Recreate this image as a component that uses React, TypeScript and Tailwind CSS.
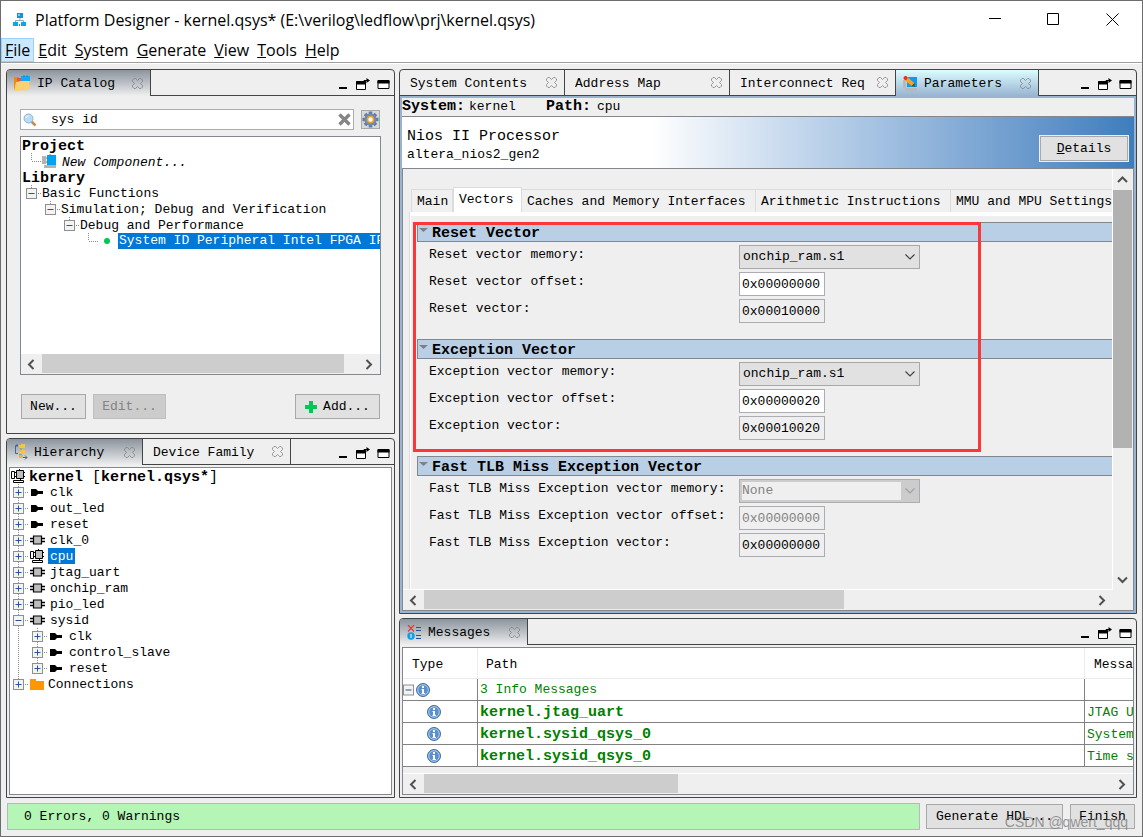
import React from "react";

const CHROME = "border-[#a8a8a8] bg-[#e1e1e1]";

/* ---------- window and panel glyphs ---------- */

function AppLogo() {
  return (
    <svg width="14" height="14" viewBox="0 0 14 14" aria-hidden="true">
      <path d="M7 5v3M2.500 10V7.500h8V10" stroke="#8fa8b8" fill="none" />
      <rect x="4" y="0" width="6" height="5" fill="#0f93e6" />
      <rect x="5" y="1" width="2" height="2" fill="#7ccaf7" />
      <rect x="0" y="9" width="5" height="4" fill="#0fa4f0" />
      <rect x="8" y="9" width="5" height="4" fill="#0fa4f0" />
      <rect x="6" y="11" width="1" height="2" fill="#0f93e6" />
    </svg>
  );
}

function CloseGlyph() {
  return (
    <svg width="11" height="11" viewBox="0 0 11 11" aria-hidden="true">
      <path
        d="M.5 2 2 .5h1.500l2 2 2-2H9L10.500 2v1.500l-2 2 2 2V9L9 10.500H7.500l-2-2-2 2H2L.5 9V7.500l2-2-2-2z"
        fill="none"
        stroke="#808080"
        strokeWidth=".8"
      />
    </svg>
  );
}

function PanelControls() {
  return (
    <div className="ml-auto flex h-full items-start gap-[7px] pt-2 pr-1">
      <button aria-label="Minimize panel" className="h-3 w-3">
        <svg width="12" height="12" viewBox="0 0 12 12">
          <path d="M3 10h8" stroke="#000" strokeWidth="2" />
        </svg>
      </button>
      <button aria-label="Detach panel" className="h-3 w-[15px]">
        <svg width="15" height="13" viewBox="0 0 15 13">
          <path d="M1.500 3.500v8h9v-8z" fill="#fff" stroke="#000" />
          <path d="M1 5h10" stroke="#000" strokeWidth="3" />
          <path d="M9 4.500v-2h4" stroke="#000" fill="none" />
          <path d="M11.500 0v5L15 2.500z" fill="#000" />
        </svg>
      </button>
      <button aria-label="Maximize panel" className="h-3 w-[13px]">
        <svg width="13" height="12" viewBox="0 0 13 12">
          <path d="M1 2.500h11v8H1z" fill="#fff" stroke="#000" />
          <path d="M.5 4h12" stroke="#000" strokeWidth="3" />
        </svg>
      </button>
    </div>
  );
}

function Chevron({ dir, color = "#505050" }: { dir: "l" | "r" | "u" | "d"; color?: string }) {
  const d = {
    l: "M7.500 1 3 5.500 7.500 10",
    r: "M3.500 1 8 5.500 3.500 10",
    u: "M1 8 5.500 3.500 10 8",
    d: "M1 3.500 5.500 8 10 3.500",
  }[dir];
  return (
    <svg width="11" height="11" viewBox="0 0 11 11" aria-hidden="true">
      <path d={d} fill="none" stroke={color} strokeWidth="2" />
    </svg>
  );
}

/* ---------- tab and tree icons ---------- */

function CatalogIcon() {
  return (
    <svg width="17" height="16" viewBox="0 0 17 16" aria-hidden="true">
      <path d="M0 2h5l1 2v11H0z" fill="#f08a00" />
      <path d="M3 3h4v4H3z" fill="#e2574c" />
      <path d="M7 1h9v8H7z" fill="#0fa9f5" />
      <path d="M10 0v2M13 0v2" stroke="#2b80b8" />
      <path d="m2 7 5-1 9 0-1 9-15 1z" fill="#ffd071" />
    </svg>
  );
}

function HierarchyIcon() {
  return (
    <svg width="14" height="16" viewBox="0 0 14 16" aria-hidden="true">
      <path d="M4 1.500H1.500v8H4M3 0v3" stroke="#3d6a8f" fill="none" />
      <path d="M5 1h2V0h4v4H5zM5 7h2V6h4v4H5z" fill="#f6c63a" />
      <path d="M7 4v2" stroke="#b98a1c" />
      <path d="M5 11h3v3M8 13.500h5M11 11.500l2 2-2 2" stroke="#3d6a8f" fill="none" />
      <rect x="5" y="11" width="4" height="3" fill="#e4b93c" />
    </svg>
  );
}

function ParametersIcon() {
  return (
    <svg width="15" height="15" viewBox="0 0 15 15" aria-hidden="true">
      <path d="M0 4h3v8H0zM2 12h12v3H2z" fill="#b9b9b9" />
      <path d="M4 1h10v10H4z" fill="#0f9af0" />
      <path d="m3 2.500 7 6" stroke="#f5a51c" strokeWidth="4" />
      <path d="m8.500 10 3.500 1-.5-4z" fill="#6b4a1c" />
      <circle cx="2.500" cy="2" r="2" fill="#ee2a2a" />
    </svg>
  );
}

function MessagesIcon() {
  return (
    <svg width="15" height="15" viewBox="0 0 15 15" aria-hidden="true">
      <path d="m1 0 6 6.500M7 0 1 6.500" stroke="#e23b2e" strokeWidth="1.200" />
      <circle cx="4" cy="11" r="3.700" fill="#0f9ee8" />
      <path d="M4 9v4" stroke="#fff" />
      <path d="M9 2.500h5M9 5.500h5M9 10.500h5M9 13.500h5" stroke="#1f4fa8" />
    </svg>
  );
}

function ComponentIcon({ color }: { color: "gray" | "blue" }) {
  return color === "blue" ? (
    <svg width="16" height="15" viewBox="0 0 16 15" aria-hidden="true">
      <path d="M0 2h4v8H0zM2 11h12v3H2z" fill="#b3b3b3" />
      <path d="M5 1h9v10H5z" fill="#00a2f2" />
      <path d="M8 0v2M4 4h2M4 8h2" stroke="#2b80b8" />
    </svg>
  ) : (
    <svg width="16" height="15" viewBox="0 0 16 15" aria-hidden="true">
      <path d="M.5 2.500h3v7h-3z" fill="#fff" stroke="#000" />
      <path d="M5.500 1.500h7v8h-7z" fill="#bdbdbd" stroke="#000" />
      <path d="M8.500 0v1M12.500 3.500H14M12.500 7.500H14M4 3.500h1M4 7.500h1M9.500 9.500v2" stroke="#000" />
      <path d="M2.500 11.500h10v2h-10z" fill="#fff" stroke="#000" />
    </svg>
  );
}

function PortIcon() {
  return (
    <svg width="16" height="9" viewBox="0 0 16 9" aria-hidden="true">
      <path d="M1 1h5l2 2h5v3H8L6 8H1z" fill="#000" />
    </svg>
  );
}

function ChipIcon() {
  return (
    <svg width="16" height="10" viewBox="0 0 16 10" aria-hidden="true">
      <path d="M0 3.500h3M0 6.500h3M12 3.500h3M12 6.500h3" stroke="#000" strokeWidth="1.500" />
      <path d="M3.500 1h8v8h-8z" fill="#bdbdbd" stroke="#000" strokeWidth="1.200" />
    </svg>
  );
}

function FolderIcon() {
  return (
    <svg width="16" height="13" viewBox="0 0 16 13" aria-hidden="true">
      <path d="M0 1h6v2h8v9H0z" fill="#ff9800" />
    </svg>
  );
}

function InfoIcon() {
  return (
    <svg width="14" height="14" viewBox="0 0 14 14" aria-hidden="true">
      <circle cx="7" cy="7" r="6.500" fill="#5b90cc" stroke="#44709f" />
      <circle cx="7" cy="7" r="5.300" fill="none" stroke="#c8dcf2" strokeWidth=".8" />
      <path d="M6 3h2v2H6zM5.500 6H8v4h1v1H5.500v-1H6V7h-.5z" fill="#fff" />
    </svg>
  );
}

function BoxSign({ sign }: { sign: "+" | "-" }) {
  return (
    <>
      <rect x="3.500" y="3.500" width="10" height="10" fill="#f3f3f3" stroke="#8f8f8f" />
      <path d={sign === "+" ? "M5.500 8.500h6M8.500 5.500v6" : "M5.500 8.500h6"} stroke="#2f4f9f" />
    </>
  );
}

/* One indentation cell of a tree: dotted guides and, where present, the expander box. */
function Guide({
  sign,
  up = false,
  down = false,
  right = true,
}: {
  sign?: "+" | "-";
  up?: boolean;
  down?: boolean;
  right?: boolean;
}) {
  return (
    <svg width="19" height="16" viewBox="0 0 19 16" className="shrink-0" aria-hidden="true">
      <g stroke="#8a8a8a" strokeDasharray="1 1" fill="none">
        {up && <path d="M8.500 0v8" />}
        {down && <path d="M8.500 8v8" />}
        {right && <path d="M9 8.500h10" />}
      </g>
      {sign && <BoxSign sign={sign} />}
    </svg>
  );
}

/* ---------- panels ---------- */

type Tab = { label: string; width: string; active?: boolean; icon?: React.ReactNode };

function Panel({
  tabs,
  className,
  focused = false,
  children,
}: {
  tabs: Tab[];
  className: string;
  focused?: boolean;
  children: React.ReactNode;
}) {
  return (
    <section
      className={`flex min-h-0 flex-col overflow-hidden rounded-t-[4px] border border-[#444] bg-[#efefef] ${className}`}
    >
      <div className="flex h-[26px] shrink-0" role="tablist">
        {tabs.map((t) => (
          <div
            key={t.label}
            className={`flex shrink-0 items-center border-r border-[#444] pr-[7px] ${t.width} ${
              t.active
                ? focused
                  ? "bg-linear-to-b from-[#dcfdff] to-[#99b4d1] pl-[7px]"
                  : "bg-linear-to-b from-[#8b949e] to-[#efefef] pl-[7px]"
                : "border-b pl-2.5"
            }`}
          >
            {t.icon}
            <button
              role="tab"
              aria-selected={!!t.active}
              className={`min-w-0 flex-1 overflow-hidden pt-0.5 text-left whitespace-nowrap ${t.icon ? "ml-1.5" : ""}`}
            >
              {t.label}
            </button>
            <button aria-label={`Close ${t.label}`} className="ml-3 shrink-0">
              <CloseGlyph />
            </button>
          </div>
        ))}
        <div className="flex flex-1 border-b border-[#444]">
          <PanelControls />
        </div>
      </div>
      {children}
    </section>
  );
}

function HScroll({ thumb }: { thumb: string }) {
  return (
    <div className="flex h-5 shrink-0 items-center bg-[#efefef]">
      <div className="flex w-[21px] shrink-0 justify-center">
        <Chevron dir="l" />
      </div>
      <div className="h-full min-w-0 flex-1">
        <div className={`h-[19px] bg-[#cdcdcd] ${thumb}`} />
      </div>
      <div className="flex w-[23px] shrink-0 justify-center">
        <Chevron dir="r" />
      </div>
    </div>
  );
}

/* ---------- IP catalog ---------- */

function IpCatalog() {
  return (
    <Panel
      className="h-[365px] shrink-0"
      tabs={[{ label: "IP Catalog", width: "w-[144px]", active: true, icon: <CatalogIcon /> }]}
    >
      <div className="flex min-h-0 flex-1 flex-col px-[13px] pt-[13px] pb-[14px]">
        <div className="flex items-center gap-[7px] pr-px">
          <div className="flex h-[21px] flex-1 items-center border border-[#abadb3] bg-white px-0.5">
            <svg width="14" height="14" viewBox="0 0 14 14" aria-hidden="true">
              <path d="m8.500 8.500 4 4" stroke="#c68f58" strokeWidth="2.600" />
              <circle cx="5.500" cy="5.500" r="4.500" fill="#b9dcf6" stroke="#8fb4d6" />
              <path d="M3 5a2.500 2.500 0 0 1 2.500-2" stroke="#fff" fill="none" />
            </svg>
            <input
              aria-label="Search IP catalog"
              defaultValue="sys id"
              className="min-w-0 flex-1 bg-transparent pl-3.5 outline-none"
            />
            <button aria-label="Clear search">
              <svg width="13" height="13" viewBox="0 0 13 13">
                <path d="m1.500 1.500 10 10M11.500 1.500l-10 10" stroke="#858585" strokeWidth="3.400" />
              </svg>
            </button>
          </div>
          <button
            aria-label="Search options"
            className="flex h-[19px] w-[19px] items-center justify-center border border-[#a8a8a8] bg-[#d9d9d9]"
          >
            <svg width="17" height="17" viewBox="0 0 17 17">
              <path d="M8.500 .5v16M.5 8.500h16M3 3l11 11M14 3 3 14" stroke="#5f7da3" strokeWidth="3.600" />
              <circle cx="8.500" cy="8.500" r="6" fill="#6d8bb0" />
              <circle cx="8.500" cy="8.500" r="3" fill="#fff" stroke="#f0a22c" strokeWidth="1.600" />
            </svg>
          </button>
        </div>
        <div className="mt-1.5 flex min-h-0 flex-1 flex-col border border-[#828790] bg-white">
          <div className="min-h-0 flex-1 overflow-hidden whitespace-nowrap">
            <div className="h-4 pl-px text-[15px] leading-5 font-bold">Project</div>
            <div className="flex h-4 items-center pl-0.5 italic">
              <Guide up />
              <ComponentIcon color="blue" />
              <span className="ml-1 pt-1">New Component...</span>
            </div>
            <div className="h-4 pl-px text-[15px] leading-5 font-bold">Library</div>
            <div className="flex h-4 items-center pl-0.5 leading-4">
              <Guide sign="-" up />
              <span className="pt-0.5">Basic Functions</span>
            </div>
            <div className="flex h-4 items-center pl-[21px] leading-4">
              <Guide sign="-" up />
              <span className="pt-0.5">Simulation; Debug and Verification</span>
            </div>
            <div className="flex h-4 items-center pl-10 leading-4">
              <Guide sign="-" up />
              <span className="pt-0.5">Debug and Performance</span>
            </div>
            <div className="flex h-4 items-center pl-[59px] leading-4">
              <Guide up />
              <svg width="19" height="16" viewBox="0 0 19 16" className="shrink-0" aria-hidden="true">
                <circle cx="8" cy="8" r="3" fill="#00c853" />
              </svg>
              <span className="h-4 bg-[#0078d7] pl-px text-white">System ID Peripheral Intel FPGA IP</span>
            </div>
          </div>
          <HScroll thumb="w-[96%]" />
        </div>
        <div className="mt-[19px] flex gap-[7px] px-px">
          <button className={`h-[25px] w-[65px] border ${CHROME}`}>New...</button>
          <button disabled className="h-[25px] w-[73px] border border-[#bfbfbf] bg-[#ccc] text-[#838383]">
            Edit...
          </button>
          <button className={`ml-auto flex h-[25px] w-[85px] items-center justify-center gap-1.5 border ${CHROME}`}>
            <svg width="12" height="12" viewBox="0 0 12 12" aria-hidden="true">
              <path d="M6 0v12M0 6h12" stroke="#00c853" strokeWidth="4" />
            </svg>
            Add...
          </button>
        </div>
      </div>
    </Panel>
  );
}

/* ---------- hierarchy ---------- */

type Node = {
  name: string;
  icon: "port" | "chip" | "cpu" | "folder";
  level?: 2;
  open?: boolean;
  last?: boolean;
  selected?: boolean;
};

const NODES: Node[] = [
  { name: "clk", icon: "port" },
  { name: "out_led", icon: "port" },
  { name: "reset", icon: "port" },
  { name: "clk_0", icon: "chip" },
  { name: "cpu", icon: "cpu", selected: true },
  { name: "jtag_uart", icon: "chip" },
  { name: "onchip_ram", icon: "chip" },
  { name: "pio_led", icon: "chip" },
  { name: "sysid", icon: "chip", open: true },
  { name: "clk", icon: "port", level: 2 },
  { name: "control_slave", icon: "port", level: 2 },
  { name: "reset", icon: "port", level: 2, last: true },
  { name: "Connections", icon: "folder", last: true },
];

function NodeIcon({ kind }: { kind: Node["icon"] }) {
  if (kind === "port") return <PortIcon />;
  if (kind === "chip") return <ChipIcon />;
  if (kind === "cpu") return <ComponentIcon color="gray" />;
  return <FolderIcon />;
}

function Hierarchy() {
  return (
    <Panel
      className="flex-1"
      tabs={[
        { label: "Hierarchy", width: "w-[136px]", active: true, icon: <HierarchyIcon /> },
        { label: "Device Family", width: "w-[148px]" },
      ]}
    >
      <div className="m-0.5 min-h-0 flex-1 overflow-hidden border border-[#828790] bg-white whitespace-nowrap">
        <div className="flex h-4 items-center pl-px text-[15px] font-bold">
          <ComponentIcon color="gray" />
          <span className="ml-0.5 pt-1 leading-4">
            kernel <span className="font-normal">[</span>kernel.qsys*<span className="font-normal">]</span>
          </span>
        </div>
        {NODES.map((n, i) => (
          <div key={i} className="flex h-4 items-center">
            {n.level === 2 && <Guide up down right={false} />}
            <Guide sign={n.open ? "-" : "+"} up down={!n.last} />
            <span className="ml-px flex w-4 shrink-0 items-center">
              <NodeIcon kind={n.icon} />
            </span>
            <span
              className={`h-4 px-0.5 leading-[17px] ${n.icon === "folder" ? "" : "ml-0.5"} ${
                n.selected ? "bg-[#0078d7] text-white" : ""
              }`}
            >
              {n.name}
            </span>
          </div>
        ))}
      </div>
    </Panel>
  );
}

/* ---------- parameters ---------- */

type Section = {
  title: string;
  prefix: string;
  memory: string;
  offset: string;
  vector: string;
  disabled?: boolean;
};

const SECTIONS: Section[] = [
  { title: "Reset Vector", prefix: "Reset vector", memory: "onchip_ram.s1", offset: "0x00000000", vector: "0x00010000" },
  {
    title: "Exception Vector",
    prefix: "Exception vector",
    memory: "onchip_ram.s1",
    offset: "0x00000020",
    vector: "0x00010020",
  },
  {
    title: "Fast TLB Miss Exception Vector",
    prefix: "Fast TLB Miss Exception vector",
    memory: "None",
    offset: "0x00000000",
    vector: "0x00000000",
    disabled: true,
  },
];

function VectorSection({ s, index }: { s: Section; index: number }) {
  const id = `section-${index}`;
  const field = "h-6 w-[86px] border border-[#abadb3] px-0.5";
  return (
    <fieldset className="pb-4">
      <div className="flex h-5 items-center border border-r-0 border-[#828790] bg-[#b8cfe5] pt-1">
        <svg width="14" height="12" viewBox="0 0 14 12" className="shrink-0" aria-hidden="true">
          <path d="M1 0h9L5.500 4z" fill="#808080" />
        </svg>
        <legend className="text-[15px] leading-4 font-bold">{s.title}</legend>
      </div>
      <div className="mt-[3px] grid grid-cols-[310px_1fr] gap-y-[3px] pl-3">
        <label htmlFor={`${id}-memory`} className="leading-5">
          {s.prefix} memory:
        </label>
        <div className="relative h-6 w-[181px]">
          <select
            id={`${id}-memory`}
            disabled={s.disabled}
            className={`h-6 w-full appearance-none border pr-6 ${
              s.disabled
                ? "border-[#abadb3] bg-[#efefef] pl-0.5 text-[#838383] opacity-100 shadow-[inset_0_0_0_2px_#ccc]"
                : `pl-[3px] ${CHROME}`
            }`}
          >
            <option>{s.memory}</option>
          </select>
          <span
            className={`pointer-events-none absolute top-px right-px flex h-[22px] w-[18px] items-center justify-center ${
              s.disabled ? "bg-[#ccc]" : ""
            }`}
          >
            <svg width="10" height="6" viewBox="0 0 10 6" aria-hidden="true">
              <path d="M.5 .5 5 5 9.500 .5" fill="none" stroke={s.disabled ? "#a0a0a0" : "#444"} strokeWidth="1.200" />
            </svg>
          </span>
        </div>
        <label htmlFor={`${id}-offset`} className="leading-5">
          {s.prefix} offset:
        </label>
        <input
          id={`${id}-offset`}
          defaultValue={s.offset}
          disabled={s.disabled}
          className={`${field} ${s.disabled ? "bg-[#efefef] text-[#838383]" : "bg-white"}`}
        />
        <label htmlFor={`${id}-vector`} className="leading-5">
          {s.prefix}:
        </label>
        <input id={`${id}-vector`} readOnly defaultValue={s.vector} className={`${field} bg-[#efefef]`} />
      </div>
    </fieldset>
  );
}

const PARAM_TABS = [
  { label: "Main", width: "w-[42px]" },
  { label: "Vectors", width: "w-[69px]" },
  { label: "Caches and Memory Interfaces", width: "w-[235px]" },
  { label: "Arithmetic Instructions", width: "w-[196px]" },
  { label: "MMU and MPU Settings", width: "w-[180px]" },
];

function Parameters() {
  return (
    <Panel
      className="flex-1"
      focused
      tabs={[
        { label: "System Contents", width: "w-[165px]" },
        { label: "Address Map", width: "w-[165px]" },
        { label: "Interconnect Requirements", width: "w-[166px]" },
        { label: "Parameters", width: "w-[143px]", active: true, icon: <ParametersIcon /> },
      ]}
    >
      <div className="flex min-h-0 flex-1 flex-col bg-[#99b4d1] p-0.5">
        <div className="flex min-h-0 flex-1 flex-col bg-[#efefef]">
          <div className="flex h-[19px] shrink-0 items-center border-b border-[#828790]">
            <b className="w-[67px] text-[15px]">System:</b>
            <span className="w-[77px]">kernel</span>
            <b className="w-[51px] text-[15px]">Path:</b>
            <span>cpu</span>
          </div>
          <div className="flex h-[51px] shrink-0 items-center justify-between bg-linear-to-r from-white from-34% to-[#3e7dbd] pr-1.5 pl-[5px]">
            <div className="pt-1">
              <h1 className="text-[15px] leading-5">Nios II Processor</h1>
              <p className="leading-4">altera_nios2_gen2</p>
            </div>
            <button className={`mt-3 h-[25px] w-[88px] border ring-1 ring-[#efefef] ${CHROME}`}>
              <u>D</u>etails
            </button>
          </div>
          <div className="flex min-h-0 flex-1 flex-col border border-[#828790]">
            <div className="flex min-h-0 flex-1">
              <div className="min-w-0 flex-1 overflow-hidden border-r border-b border-white pt-[18px] pl-1.5">
                <div className="flex items-end pl-0.5 whitespace-nowrap">
                  {PARAM_TABS.map((t) => (
                    <button
                      key={t.label}
                      className={`shrink-0 border border-b-0 border-[#dcdcdc] pl-[5px] text-left ${t.width} ${
                        t.label === "Vectors" ? "h-[25px] bg-white" : "-ml-px h-[23px] bg-[#f0f0f0] pt-0.5 first:ml-0"
                      }`}
                    >
                      {t.label}
                    </button>
                  ))}
                </div>
                <div className="h-[377px] border-l border-[#dcdcdc]">
                  <div className="h-full border-t-4 border-l border-white pt-1.5 pl-1.5">
                    <div className="relative">
                      {SECTIONS.map((s, i) => (
                        <VectorSection key={s.title} s={s} index={i} />
                      ))}
                      <div className="pointer-events-none absolute top-0 -left-1 h-[230px] w-[568px] border-3 border-[#fc3737]" />
                    </div>
                  </div>
                </div>
              </div>
              <div className="mr-px flex w-[19px] shrink-0 flex-col items-center">
                <div className="flex h-[21px] items-center">
                  <Chevron dir="u" />
                </div>
                <div className="w-full flex-1">
                  <div className="h-[68%] w-full bg-[#b2b2b2]" />
                </div>
                <div className="flex h-[21px] items-center">
                  <Chevron dir="d" />
                </div>
              </div>
            </div>
            <div className="pr-5">
              <HScroll thumb="w-[63%]" />
            </div>
          </div>
        </div>
      </div>
    </Panel>
  );
}

/* ---------- messages ---------- */

const MESSAGES = [
  { path: "kernel.jtag_uart", text: "JTAG UART" },
  { path: "kernel.sysid_qsys_0", text: "System ID" },
  { path: "kernel.sysid_qsys_0", text: "Time stamp" },
];

function Messages() {
  const head = "border-b border-[#ececec] pt-1 text-left font-normal";
  const cell = "border-b border-[#828282] p-0";
  return (
    <Panel
      className="h-[180px] shrink-0"
      tabs={[{ label: "Messages", width: "w-[128px]", active: true, icon: <MessagesIcon /> }]}
    >
      <div className="m-0.5 flex min-h-0 flex-1 flex-col overflow-hidden border border-[#828790]">
        <table className="w-full table-fixed border-separate border-spacing-0 bg-white whitespace-nowrap">
          <colgroup>
            <col className="w-[75px]" />
            <col />
            <col className="w-[48px]" />
          </colgroup>
          <thead>
            <tr className="h-[31px]">
              <th className={`${head} border-r pl-[9px]`}>Type</th>
              <th className={`${head} border-r pl-2`}>Path</th>
              <th className={`${head} overflow-hidden pl-[9px]`}>Message</th>
            </tr>
          </thead>
          <tbody className="text-[#008000]">
            <tr className="h-[22px]">
              <td className={`${cell} border-r`}>
                <div className="flex items-center">
                  <svg width="11" height="12" viewBox="3 3 11 11" aria-hidden="true">
                    <BoxSign sign="-" />
                  </svg>
                  <span className="ml-0.5">
                    <InfoIcon />
                  </span>
                </div>
              </td>
              <td className={`${cell} border-r pl-0.5`}>3 Info Messages</td>
              <td className={cell} />
            </tr>
            {MESSAGES.map((m, i) => (
              <tr key={i} className="h-[22px]">
                <td className={`${cell} border-r`}>
                  <div className="pl-6">
                    <InfoIcon />
                  </div>
                </td>
                <td className={`${cell} border-r pt-[3px] pl-0.5 text-[15px] leading-4 font-bold`}>{m.path}</td>
                <td className={`${cell} overflow-hidden pt-[3px] pl-0.5 leading-4`}>{m.text}</td>
              </tr>
            ))}
          </tbody>
        </table>
        <div className="flex-1 border-b border-white bg-[#efefef]" />
        <HScroll thumb="w-[37%]" />
      </div>
    </Panel>
  );
}

/* ---------- window ---------- */

const MENU = ["File", "Edit", "System", "Generate", "View", "Tools", "Help"];

export default function App() {
  return (
    <div className="flex h-screen min-h-[700px] flex-col overflow-hidden border border-[#6d6d6d] bg-[#efefef] font-['Liberation_Mono','Noto_Sans_CJK_SC',monospace] text-[13px] text-black">
      <header className="shrink-0 border-b border-[#a0a0a0] bg-white font-['Open_Sans','Noto_Sans',sans-serif]">
        <div className="flex h-[37px] items-center pl-3">
          <AppLogo />
          <span className="ml-2 text-base">
            {"Platform Designer - kernel.qsys* (E:\\verilog\\ledflow\\prj\\kernel.qsys)"}
          </span>
          <div className="ml-auto flex">
            <button aria-label="Minimize" className="flex h-9 w-[58px] items-center justify-center">
              <svg width="13" height="13" viewBox="0 0 13 13">
                <path d="M0 5.500h12" stroke="#000" />
              </svg>
            </button>
            <button aria-label="Maximize" className="flex h-9 w-[58px] items-center justify-center">
              <svg width="13" height="13" viewBox="0 0 13 13">
                <path d="M.5 .5h11v11H.5z" fill="none" stroke="#000" />
              </svg>
            </button>
            <button aria-label="Close" className="flex h-9 w-[60px] items-center justify-center">
              <svg width="13" height="13" viewBox="0 0 13 13">
                <path d="m.5 .5 12 12M12.500 .5l-12 12" stroke="#000" />
              </svg>
            </button>
          </div>
        </div>
        <nav className="flex h-6 text-base leading-[22px]">
          {MENU.map((m) => (
            <button
              key={m}
              className={`border px-[3px] ${m === "File" ? "border-[#99d1ff] bg-[#cce8ff]" : "border-transparent"}`}
            >
              <u>{m[0]}</u>
              {m.slice(1)}
            </button>
          ))}
        </nav>
      </header>

      <main className="flex min-h-0 flex-1 gap-1 border-t border-white px-[5px] pt-[5px]">
        <div className="flex w-[389px] shrink-0 flex-col gap-1">
          <IpCatalog />
          <Hierarchy />
        </div>
        <div className="flex min-w-0 flex-1 flex-col gap-1">
          <Parameters />
          <Messages />
        </div>
      </main>

      <footer className="relative flex shrink-0 items-center pt-[5px] pr-[7px] pb-1.5 pl-1.5">
        <div className="flex h-[27px] flex-1 items-center border border-[#b8b8b8] bg-[#b5f5b5] pl-4">
          0 Errors, 0 Warnings
        </div>
        <button className={`ml-1.5 h-[25px] w-[137px] border ${CHROME}`}>Generate HDL...</button>
        <button className={`ml-[7px] h-[25px] w-[65px] border ${CHROME}`}>Finish</button>
        <span className="pointer-events-none absolute right-3.5 bottom-1 font-['Liberation_Sans',sans-serif] text-sm text-[#707070]/70">
          CSDN @qwert_qqq
        </span>
      </footer>
    </div>
  );
}
